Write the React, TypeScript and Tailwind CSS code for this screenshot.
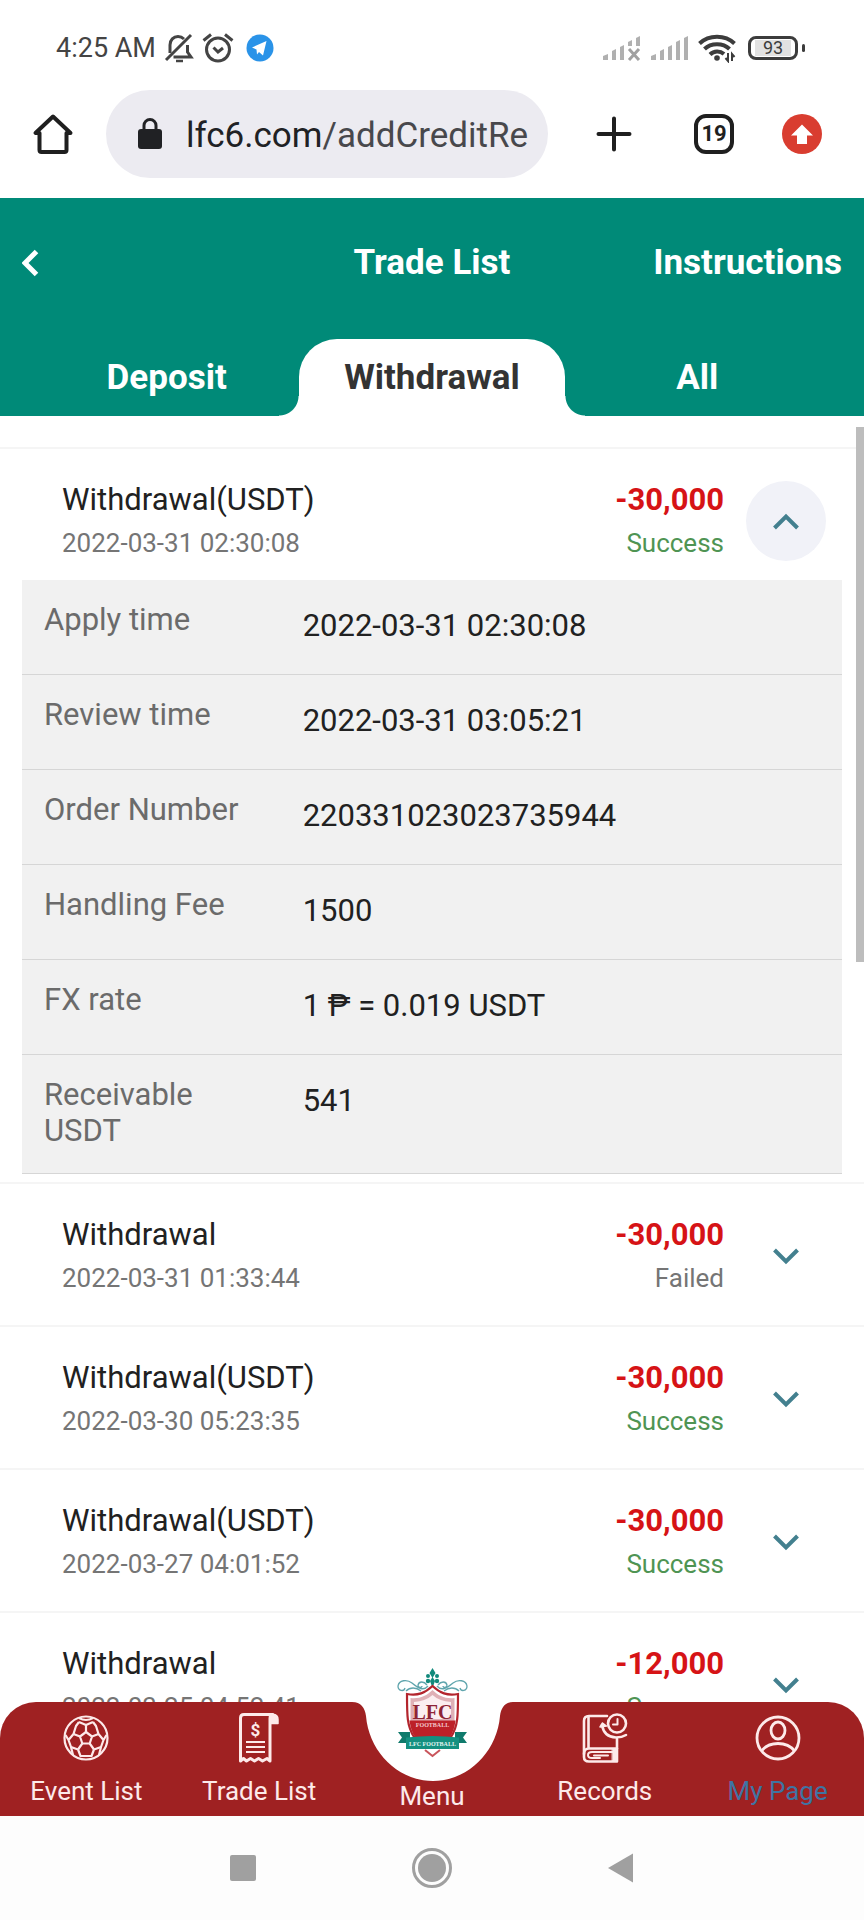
import { useState } from 'react'
import type { ReactNode } from 'react'
import { clsx } from 'clsx'

type Status = 'Success' | 'Failed'

interface Trade {
  id: number
  title: string
  time: string
  amount: string
  status: Status
  details?: { label: string; value: string }[]
}

const TABS = ['Deposit', 'Withdrawal', 'All']

const TRADES: Trade[] = [
  {
    id: 1,
    title: 'Withdrawal(USDT)',
    time: '2022-03-31 02:30:08',
    amount: '-30,000',
    status: 'Success',
    details: [
      { label: 'Apply time', value: '2022-03-31 02:30:08' },
      { label: 'Review time', value: '2022-03-31 03:05:21' },
      { label: 'Order Number', value: '220331023023735944' },
      { label: 'Handling Fee', value: '1500' },
      { label: 'FX rate', value: '1 ₱ = 0.019 USDT' },
      { label: 'Receivable USDT', value: '541' },
    ],
  },
  { id: 2, title: 'Withdrawal', time: '2022-03-31 01:33:44', amount: '-30,000', status: 'Failed' },
  { id: 3, title: 'Withdrawal(USDT)', time: '2022-03-30 05:23:35', amount: '-30,000', status: 'Success' },
  { id: 4, title: 'Withdrawal(USDT)', time: '2022-03-27 04:01:52', amount: '-30,000', status: 'Success' },
  { id: 5, title: 'Withdrawal', time: '2022-03-25 04:52:41', amount: '-12,000', status: 'Success' },
]

/* ---------- status bar ---------- */

const BellOffIcon = () => (
  <svg width="30" height="30" viewBox="0 0 30 30" fill="none" stroke="#444" strokeWidth="3">
    <path d="M2 27 27 2" />
    <path d="M6 20V12c0-5 3.500-8.500 8-8.500 2.500 0 4.500 1 6 2.500" />
    <path d="M23.500 12v7l3.500 5H9.500" />
    <path d="M12 28h7" strokeWidth="2.500" />
  </svg>
)

const AlarmIcon = () => (
  <svg width="32" height="30" viewBox="0 0 32 30" fill="none" stroke="#444" strokeWidth="3">
    <circle cx="16" cy="16.500" r="11.500" />
    <path d="m11.500 14.500 4.500 4.500 5-4" />
    <path d="M1.500 7.500 9 1.500M30.500 7.500 23 1.500" />
  </svg>
)

const TelegramIcon = () => (
  <svg width="28" height="28" viewBox="0 0 28 28">
    <circle cx="14" cy="14" r="13.500" fill="#2a93e8" />
    <path d="M6 13.500 20.500 7 17 21.500l-4-3.500-2 2.500-.500-5z" fill="#fff" />
  </svg>
)

const SignalIcon = ({ off = false }: { off?: boolean }) => (
  <svg width="40" height="26" viewBox="0 0 40 26" fill="#b0b0b0">
    <path d="M1 25v-4l5-2v6zM10 25V16l4-2v11zM18 25V12l4-2v15z" />
    {off ? (
      <>
        <path d="M26 11V7l4-2v6zM34 11V3l4-2v10z" />
        <path d="m27 14 10 11M37 14 27 25" stroke="#a0a0a0" strokeWidth="3" />
      </>
    ) : (
      <path d="M26 25V7l4-2v20zM34 25V3l4-2v24z" />
    )}
  </svg>
)

const WifiIcon = () => (
  <svg width="38" height="30" viewBox="0 0 38 30" fill="none" stroke="#3c3c3c" strokeWidth="4">
    <path d="M1.500 10.500C11 1.500 27 1.500 36.500 10.500" />
    <path d="M6.500 16C13 9.500 25 9.500 31.500 16" />
    <path d="M12 21.500c4-4 10-4 14-.5" />
    <circle cx="19" cy="25" r="2.800" fill="#3c3c3c" stroke="none" />
    <path d="M30 20v8l-2.500-3M34 28v-7l2.500 3" strokeWidth="2" />
  </svg>
)

const Battery = () => (
  <div className="flex items-center gap-1">
    <div className="flex h-6 w-[50px] items-center justify-center rounded-lg border-3 border-[#3c3c3c]">
      <span className="bg-[#e2e2e2] px-2 text-lg leading-4 text-[#3c3c3c]">93</span>
    </div>
    <div className="h-2 w-[3px] rounded-sm bg-[#3c3c3c]" />
  </div>
)

const StatusBar = () => (
  <div className="flex h-20 shrink-0 items-center justify-between pt-4 pr-[59px] pl-14">
    <div className="flex items-center gap-2">
      <span className="text-[27px] text-[#444]">4:25 AM</span>
      <BellOffIcon />
      <AlarmIcon />
      <span className="pl-1">
        <TelegramIcon />
      </span>
    </div>
    <div className="flex items-center gap-2">
      <SignalIcon off />
      <SignalIcon />
      <WifiIcon />
      <span className="pl-1">
        <Battery />
      </span>
    </div>
  </div>
)

/* ---------- browser toolbar ---------- */

const BrowserBar = () => (
  <div className="flex shrink-0 items-center pt-[10px] pr-[42px] pb-5 pl-8">
    <button aria-label="Home">
      <svg width="42" height="42" viewBox="0 0 42 42" fill="none" stroke="#1f1f1f" strokeWidth="4" strokeLinejoin="round">
        <path d="M21 3.500 3.500 20H7.500v17q0 2 2 2h23q2 0 2-2V20h4z" />
      </svg>
    </button>
    <div className="ml-8 flex h-[88px] min-w-0 flex-1 items-center rounded-full bg-[#ecebf1] pr-4 pl-8">
      <svg className="shrink-0" width="24" height="32" viewBox="0 0 24 32">
        <path d="M6 13V7.500a6 6 0 0 1 12 0V13" fill="none" stroke="#202124" strokeWidth="3" />
        <rect y="11" width="24" height="20" rx="3" fill="#202124" />
      </svg>
      <span className="ml-6 truncate pt-1 text-[35px] text-[#48484c]">
        <span className="text-[#202124]">lfc6.com</span>/addCreditRe
      </span>
    </div>
    <button className="ml-12" aria-label="New tab">
      <svg width="36" height="36" viewBox="0 0 36 36" stroke="#1f1f1f" strokeWidth="4" strokeLinecap="round">
        <path d="M18 2.500v31M2.500 18h31" />
      </svg>
    </button>
    <button
      aria-label="Open tabs"
      className="ml-[62px] flex size-10 items-center justify-center rounded-xl border-4 border-[#1f1f1f] text-[22px] leading-none font-bold text-[#1f1f1f]"
    >
      19
    </button>
    <button className="ml-12" aria-label="Update">
      <svg width="40" height="40" viewBox="0 0 40 40">
        <circle cx="20" cy="20" r="20" fill="#d93d30" />
        <path d="M20 10.500 31 21.500h-6V30H15v-8.500H9z" fill="#fff" />
      </svg>
    </button>
  </div>
)

/* ---------- page header ---------- */

interface HeaderProps {
  active: string
  onChange: (tab: string) => void
}

const Header = ({ active, onChange }: HeaderProps) => (
  <header className="shrink-0 bg-[#008a78] font-bold text-white">
    <div className="grid h-[130px] grid-cols-3 items-center px-[22px] text-[35px]">
      <button aria-label="Back" className="justify-self-start">
        <svg width="18" height="28" viewBox="0 0 18 28" fill="none" stroke="currentColor" strokeWidth="5">
          <path d="M14.500 2.500 3 14l11.500 11.500" />
        </svg>
      </button>
      <h1 className="text-center">Trade List</h1>
      <a href="#instructions" className="justify-self-end">
        Instructions
      </a>
    </div>
    <div className="grid grid-cols-3 px-[34px] pt-[11px]" role="tablist">
      {TABS.map((tab) => (
        <button
          key={tab}
          role="tab"
          aria-selected={active === tab}
          onClick={() => onChange(tab)}
          className={clsx(
            'relative h-[77px] pt-[2px] text-[35px]',
            active === tab &&
              'rounded-t-[38px] bg-white text-[#333] before:absolute before:bottom-0 before:-left-5 before:size-5 before:bg-[radial-gradient(circle_at_0_0,transparent_19px,#fff_20px)] after:absolute after:-right-5 after:bottom-0 after:size-5 after:bg-[radial-gradient(circle_at_100%_0,transparent_19px,#fff_20px)]',
          )}
        >
          {tab}
        </button>
      ))}
    </div>
  </header>
)

/* ---------- list ---------- */

interface TradeItemProps {
  trade: Trade
  open: boolean
  onToggle: () => void
}

const TradeItem = ({ trade, open, onToggle }: TradeItemProps) => (
  <li className="border-t-2 border-[#f5f5f5]">
    <div className="flex items-center pt-8 pr-[38px] pb-[29px] pl-[62px]">
      <div className="flex-1">
        <p className="text-[31px] leading-[38px] text-[#212121]">{trade.title}</p>
        <p className="mt-[6px] text-[26px] leading-9 text-[#757575]">{trade.time}</p>
      </div>
      <div className="text-right">
        <p className="text-[31px] leading-[38px] font-bold text-[#d61316]">{trade.amount}</p>
        <p className={clsx('mt-[6px] text-[26px] leading-9', trade.status === 'Success' ? 'text-[#4f9453]' : 'text-[#757575]')}>
          {trade.status}
        </p>
      </div>
      <button
        onClick={onToggle}
        aria-expanded={open}
        aria-label="Toggle details"
        className={clsx('ml-[22px] flex size-20 items-center justify-center rounded-full', open && 'bg-[#f1f2f8]')}
      >
        <svg
          className={clsx(open && 'rotate-180')}
          width="26"
          height="17"
          viewBox="0 0 26 17"
          fill="none"
          stroke="#43808f"
          strokeWidth="4"
        >
          <path d="M1.500 2 13 13.500 24.500 2" />
        </svg>
      </button>
    </div>
    {open && trade.details && (
      <dl className="mx-[22px] -mt-[10px] mb-2 bg-[#f1f1f1]">
        {trade.details.map((d) => (
          <div key={d.label} className="grid grid-cols-3 border-b border-[#d6d6d6] px-[22px] pt-[22px] pb-6 text-[31px]">
            <dt className="pr-10 leading-9 text-[#6b6b6b]">{d.label}</dt>
            <dd className="col-span-2 leading-[48px] text-[#212121]">{d.value}</dd>
          </div>
        ))}
      </dl>
    )}
  </li>
)

/* ---------- bottom navigation ---------- */

const BallIcon = () => (
  <svg width="46" height="46" viewBox="0 0 46 46" fill="none" stroke="currentColor" strokeWidth="2.200" strokeLinejoin="round">
    <circle cx="23" cy="23" r="21.500" />
    <path d="m23 17 6 4.500-2.300 7h-7.400l-2.300-7z" />
    <path d="M23 17v-7M29 21.500l6.500-2.500M26.700 28.500l4.300 6M19.300 28.500l-4.300 6M17 21.500 10.500 19" />
    <path d="M23 10l-7-3M23 10l7-3M35.500 19 33 11l-3-4M35.500 19l5 6 3-5M31 34.500l7-2.500 2.500-7M31 34.500 28.500 41h-11L15 34.500M15 34.500 8 32l-2.500-7M10.500 19l-5 6-3-5M10.500 19 13 11l3-4" />
    <path d="M16 3q7 4 14 0M38 32l-2 8M8 32l2 8" />
  </svg>
)

const ReceiptIcon = () => (
  <svg width="42" height="50" viewBox="0 0 42 50" fill="none" stroke="currentColor" strokeWidth="3" strokeLinejoin="round">
    <path d="M2.500 48V5q0-3.500 3.500-3.500h29q-3 0-3 4V48l-3-2.500-4.500 2.500-4-2.500-4 2.500-4-2.500-4 2.500-3-2.500z" />
    <path d="M32 10.500V5q0-3.500 3-3.500 5 0 5 5v4z" fill="currentColor" strokeWidth="1.500" />
    <path d="M8 29h19M8 34h19M8 39h19" strokeWidth="2.200" />
    <text x="17.500" y="22.500" textAnchor="middle" fontSize="17" fontWeight="700" fill="currentColor" stroke="none">
      $
    </text>
  </svg>
)

const RecordsIcon = () => (
  <svg width="46" height="50" viewBox="0 0 46 50" fill="none" stroke="currentColor" strokeWidth="2.600" strokeLinejoin="round" strokeLinecap="round">
    <path d="M25 3H7Q2 3 2 8v36q0 4.500 5 4.500h28V26" />
    <path d="M6.500 4v31M2 41q0-5.500 5-5.500h28" />
    <path d="M35 39H10q-4 0-4 3t4 3h8M12 42.500h14" strokeWidth="2" />
    <path d="M30.500 36h4.500v12h-4.500z" fill="currentColor" strokeWidth="1" />
    <circle cx="35" cy="10.500" r="9" />
    <path d="M35.500 6v5.500h-4.500" strokeWidth="2" />
    <path d="M20 12q2 12 14 12.500 6 0 10-2.500" />
    <path d="m18 14 2.500-4 4 3z" fill="currentColor" strokeWidth="1.500" />
  </svg>
)

const UserIcon = () => (
  <svg width="46" height="46" viewBox="0 0 46 46" fill="none" stroke="currentColor" strokeWidth="2.800">
    <circle cx="23" cy="23" r="21" />
    <ellipse cx="23" cy="15.500" rx="7" ry="8.500" />
    <path d="M6.500 36C14 26 32 26 39.500 36" />
  </svg>
)

const CrestLogo = () => (
  <svg width="74" height="94" viewBox="0 0 74 94" fontFamily="'Liberation Serif', serif" fontWeight="700" textAnchor="middle">
    <g fill="#128a7c">
      <path d="M37.500 2l3 5-3 5-3-5zM37.500 11l2.500 4-2.500 7-2.500-7z" />
      <circle cx="33" cy="10" r="2" />
      <circle cx="42" cy="10" r="2" />
      <circle cx="33" cy="15" r="2.200" />
      <circle cx="42" cy="15" r="2.200" />
    </g>
    <g fill="none" stroke="#5fa5ad" strokeWidth="1.300">
      <path d="M33 20c-5 6-11 1-16-3s-13-3-14 3c0 5 6 6 7 2M32 19c-3-4-8-4-9 0 0 3 4 3 4 1M11 25c4-4 10-4 15 0" />
      <path d="M42 20c5 6 11 1 16-3s13-3 14 3c0 5-6 6-7 2M43 19c3-4 8-4 9 0 0 3-4 3-4 1M64 25c-4-4-10-4-15 0" />
    </g>
    <path d="M12 28c11 2 18-1 25.500-8C45 27 52 30 63 28c0 22 0 32-7 43H19C12 60 12 50 12 28z" fill="#fff" stroke="#b3252d" strokeWidth="2.200" />
    <path d="M15.500 32c9 1 16-2 22-8 6 6 13 9 22 8v23h-44z" fill="#dfb0b6" />
    <path d="M19 36q12-1 18.500-7Q44 35 56 36v17H19z" fill="#fbeef0" />
    <path d="M14.500 54.500h46c-1 8-3 13-6 17.500h-34c-3-4.500-5-9.500-6-17.500z" fill="#bd2028" />
    <text x="37.500" y="52.500" fontSize="20" fill="#8e2436">
      LFC
    </text>
    <text x="37.500" y="61" fontSize="6" fill="#f3c9cc">
      FOOTBALL
    </text>
    <path d="M3 66h12v11H3l4-5.500zM72 66H60v11h12l-4-5.500z" fill="#0f7a6c" />
    <path d="M11 71.500q26.500-3 53 0V83H11z" fill="#149080" />
    <text x="37.500" y="79.500" fontSize="6" fill="#e2f5f2">
      LFC FOOTBALL
    </text>
    <path d="m30 84 7.500 6 7.500-6" fill="#fff" stroke="#c9545b" strokeWidth="2" />
  </svg>
)

const NavItem = ({ icon, label, active = false }: { icon: ReactNode; label: string; active?: boolean }) => (
  <a href="#nav" className="flex flex-col items-center pt-[11px]">
    <span className="flex h-[50px] items-center">{icon}</span>
    <span className={clsx('mt-3 text-[26px] leading-8', active && 'text-[#3f74a3]')}>{label}</span>
  </a>
)

const BottomNav = () => (
  <nav className="relative grid h-[114px] shrink-0 grid-cols-5 rounded-t-[36px] bg-[#9f2122] text-[#fdeaea]">
    <NavItem icon={<BallIcon />} label="Event List" />
    <NavItem icon={<ReceiptIcon />} label="Trade List" />
    <a href="#menu" className="relative flex flex-col items-center justify-end pb-1">
      <svg className="absolute top-0" width="162" height="80" viewBox="0 0 162 80" fill="#fff">
        <path d="M1-1V0C10 0 14 6 15 14 18 50 47 79 82 79S146 50 149 14C150 6 154 0 162 0V-1z" />
      </svg>
      <span className="absolute -top-9">
        <CrestLogo />
      </span>
      <span className="relative text-[26px] leading-8">Menu</span>
    </a>
    <NavItem icon={<RecordsIcon />} label="Records" />
    <NavItem icon={<UserIcon />} label="My Page" active />
  </nav>
)

const SystemBar = () => (
  <div className="flex h-[104px] shrink-0 items-center justify-center gap-[156px] bg-[#fdfdfd]">
    <button aria-label="Recent apps" className="size-[26px] rounded-xs bg-[#a0a0a0]" />
    <button aria-label="Home screen" className="flex size-10 items-center justify-center rounded-full border-3 border-[#a0a0a0]">
      <span className="size-7 rounded-full bg-[#a0a0a0]" />
    </button>
    <button aria-label="Go back">
      <svg width="26" height="30" viewBox="0 0 26 30">
        <path d="M0 15 25 .5v29z" fill="#a0a0a0" />
      </svg>
    </button>
  </div>
)

export default function App() {
  const [tab, setTab] = useState('Withdrawal')
  const [openId, setOpenId] = useState<number | null>(1)

  return (
    <div className="flex h-screen flex-col bg-white font-[Roboto,sans-serif]">
      <StatusBar />
      <BrowserBar />
      <Header active={tab} onChange={setTab} />
      <main className="relative min-h-0 flex-1">
        <ul className="h-full overflow-y-auto pt-[31px] [scrollbar-width:none]">
          {TRADES.map((trade) => (
            <TradeItem
              key={trade.id}
              trade={trade}
              open={openId === trade.id}
              onToggle={() => setOpenId(openId === trade.id ? null : trade.id)}
            />
          ))}
        </ul>
        {/* scroll thumb */}
        <div className="absolute top-[11px] right-0 h-[535px] w-2 bg-[#bdbdbd]" />
      </main>
      <BottomNav />
      <SystemBar />
    </div>
  )
}
